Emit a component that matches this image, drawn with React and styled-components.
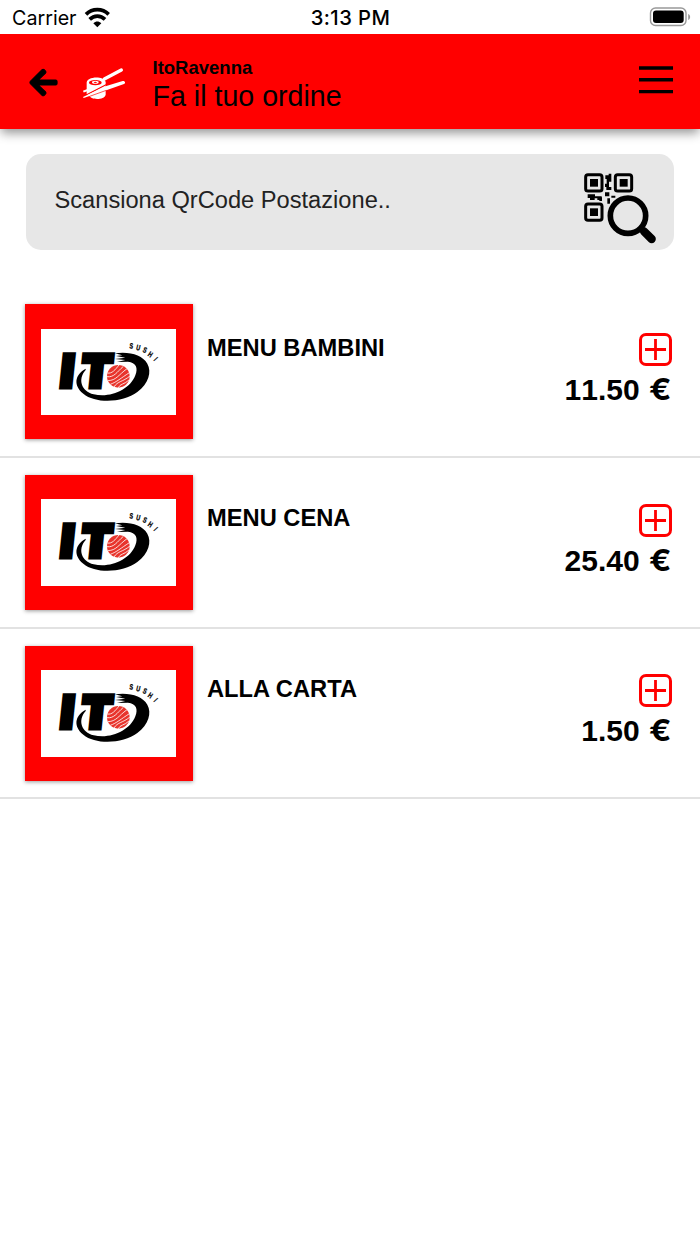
import React from 'react'
import styled, { createGlobalStyle } from 'styled-components'
import { FaArrowLeft } from 'react-icons/fa'

const menus = [
    { name: 'MENU BAMBINI', price: '11.50' },
    { name: 'MENU CENA', price: '25.40' },
    { name: 'ALLA CARTA', price: '1.50' },
]

const WifiIcon = () => (
    <svg width="26" height="20" viewBox="254 22 78 60" fill="none" stroke="#000" strokeWidth="11">
        <path d="M257 41 C276 22 306 22 325 41" />
        <path d="M268 56 C281 43 301 43 314 56" />
        <path d="M279 68 C287 61 295 61 303 68 L291 80 Z" fill="#000" stroke="none" />
    </svg>
)

const SushiIcon = () => (
    <svg width="44" height="32" viewBox="21 24 132 96">
        <path d="M35 70 C33 50 85 46 92 66 L92 104 C88 121 47 121 42 106 L35 102 Z" fill="#fff" />
        <ellipse cx="61" cy="68" rx="19" ry="8" fill="#f00" />
        <ellipse cx="61" cy="67" rx="10" ry="4.5" fill="#fff" />
        <ellipse cx="61" cy="67" rx="5" ry="2" fill="#f00" />
        <path d="M88 57 L139 30" stroke="#fff" strokeWidth="10" strokeLinecap="round" />
        <path d="M25 95 L38 90" stroke="#fff" strokeWidth="6" />
        <path d="M32 106 L96 73" stroke="#f00" strokeWidth="3.5" />
        <path d="M24 111 L94 78 L143 63 C151 62 152 70 147 72 L96 90 L26 114 Z" fill="#fff" />
        <path d="M44 109 L94 91" stroke="#f00" strokeWidth="2" />
    </svg>
)

const QrSearchIcon = () => (
    <svg width="73" height="71" viewBox="42 68 219 213">
        {[[44, 70], [133, 70], [44, 158]].map(([x, y]) => (
            <g key={`${x}-${y}`}>
                <rect x={x + 3} y={y + 3} width="49" height="49" rx="7" fill="none" stroke="#000" strokeWidth="9" />
                <rect x={x + 16} y={y + 16} width="24" height="23" />
            </g>
        ))}
        <path d="M106 75h10v-5h8v24h-7v16h7v9h-15v-9h-4v-10h5v-14h-4zM53 132h22v6h20v11h-13v-5h-8v5H60v-6h-7zM105 126h13v12h-13zM88 141h8v11h-8zM112 144h8v16h-8zM124 136h12v6h-12z" />
        <circle cx="174" cy="196" r="65" fill="#e7e7e7" />
        <circle cx="174" cy="196" r="53" fill="none" stroke="#000" strokeWidth="17" />
        <path d="M210 231 L222 243" stroke="#000" strokeWidth="17" />
        <path d="M222 243 L245 266" stroke="#000" strokeWidth="25" strokeLinecap="round" />
    </svg>
)

const ItoLogo = () => (
    <svg width="135" height="86.67" viewBox="78 100 405 260">
        <path
            d="M212 219 C178 238 175 270 205 294 C242 325 325 321 367 289 C401 263 411 229 397 204 C382 178 344 167 300 173 L322 179 L303 181 L331 186 L300 190 L331 193 L306 199 L339 198 C363 201 370 216 361 239 C345 282 286 308 236 296 C199 287 187 251 212 223 Z"
            fill="#000"
        />
        <g transform="translate(0 273) skewX(-6)" fontFamily="Liberation Sans, sans-serif" fontWeight="700" fontSize="132" stroke="#000" strokeWidth="21">
            <text x="134" y="-1">I</text>
            <text x="200" y="-1">T</text>
        </g>
        <circle cx="310" cy="242" r="34" fill="#e8352d" />
        <g fill="none" stroke="#fff" strokeWidth="2.5">
            <path d="M277 232 C291 235 301 222 312 208" />
            <path d="M276 243 C297 246 306 229 325 212" />
            <path d="M279 255 C304 254 309 239 336 219" />
            <path d="M286 266 C305 259 317 248 343 231" />
            <path d="M297 274 C308 256 323 259 345 241" />
            <path d="M309 277 C316 263 328 267 342 253" />
        </g>
        <g fontFamily="Liberation Sans, sans-serif" fontWeight="700" fontSize="23" textAnchor="middle" stroke="#000" strokeWidth="1">
            {[['S', 349, 150, 6], ['U', 370, 156, 14], ['S', 390, 163, 24], ['H', 406, 176, 34], ['I', 422, 190, 48]].map(([letter, x, y, turn]) => (
                <text key={x} transform={`translate(${x} ${y}) rotate(${turn}) scale(.7 1)`} y="8">{letter}</text>
            ))}
        </g>
    </svg>
)

const MenuItem = ({ name, price }) => (
    <Row>
        <Thumb><LogoPanel><ItoLogo /></LogoPanel></Thumb>
        <Name>{name}</Name>
        <Side>
            <AddButton aria-label={`Aggiungi ${name}`}>
                <svg width="21" height="21" viewBox="0 0 21 21" stroke="#f00" strokeWidth="2.8">
                    <path d="M10.5 0V21M0 10.5H21" />
                </svg>
            </AddButton>
            <Price>{price} <Euro>€</Euro></Price>
        </Side>
    </Row>
)

const App = () => {
    return (
        <Screen>
            <GlobalStyle />
            <StatusBar>
                <Carrier>Carrier <WifiIcon /></Carrier>
                <Clock>3:13 PM</Clock>
                <Battery>
                    <svg width="42" height="20" viewBox="0 0 42 20">
                        <rect x="1.5" y="1" width="35.5" height="17.5" rx="5" fill="none" stroke="#999" strokeWidth="1.4" />
                        <rect x="4" y="3.5" width="30.7" height="12.5" rx="3" />
                        <path d="M39.2 7 C41.8 8 41.8 12 39.2 13 Z" fill="#999" />
                    </svg>
                </Battery>
            </StatusBar>
            <Header>
                <BackButton aria-label="Indietro"><FaArrowLeft size={31} stroke="#000" strokeWidth={18} /></BackButton>
                <Brand><SushiIcon /></Brand>
                <Titles>
                    <Place>ItoRavenna</Place>
                    <Title>Fa il tuo ordine</Title>
                </Titles>
                <Burger aria-label="Menu">
                    <svg width="34" height="28" viewBox="0 0 34 28" stroke="#000" strokeWidth="3.4">
                        <path d="M0 2H34M0 13.8H34M0 25.6H34" />
                    </svg>
                </Burger>
            </Header>
            <Search>
                <span>Scansiona QrCode Postazione..</span>
                <QrSearchIcon />
            </Search>
            <List>
                {menus.map((menu) => <MenuItem key={menu.name} {...menu} />)}
            </List>
        </Screen>
    )
}

const GlobalStyle = createGlobalStyle`
    * {
        box-sizing: border-box;
    }

    body {
        margin: 0;
        background: #fff;
    }

    svg {
        display: block;
        flex-shrink: 0;
        overflow: visible;
    }

    button {
        border: 0;
        padding: 0;
        background: none;
        color: #000;
    }
`

const Screen = styled.div`
    width: 700px;
    height: 1244px;
    overflow: hidden;
    background: #fff;
    color: #000;
    font-family: 'Liberation Sans', Arial, sans-serif;
`

const StatusBar = styled.div`
    height: 34px;
    padding: 0 9px 0 12px;
    display: grid;
    grid-template-columns: 1fr auto 1fr;
    align-items: center;
    font-family: Inter, sans-serif;
    font-size: 20px;
`

const Carrier = styled.div`
    display: flex;
    align-items: center;
    gap: 8px;
    padding-top: 1px;
    font-size: 19.7px;
`

const Clock = styled.div`
    padding: 1px 2px 0 0;
    font-size: 20.2px;
    font-weight: 500;
    letter-spacing: .45px;
`

const Battery = styled.div`
    display: flex;
    justify-content: flex-end;
`

const Header = styled.header`
    height: 94.5px;
    padding: 0 27px 0 28px;
    display: flex;
    align-items: center;
    background: #f00;
    box-shadow: 0 5px 10px -1px rgba(0, 0, 0, .42);
    clip-path: inset(0 0 -24px 0);
`

const BackButton = styled.button`
    width: 54px;
    padding: 2px 0 0;
`

const Brand = styled.div`
    padding-top: 5px;
`

const Titles = styled.div`
    flex: 1;
    padding: 8px 0 0 26.5px;
`

const Place = styled.div`
    font-size: 18.5px;
    line-height: 22px;
    font-weight: 700;
`

const Title = styled.div`
    font-size: 28.6px;
    line-height: 34px;
`

const Burger = styled.button`
    padding-bottom: 2px;
`

const Search = styled.div`
    height: 96px;
    margin: 25.5px 26px 0 25.5px;
    padding: 0 17px 0 29px;
    display: flex;
    align-items: center;
    justify-content: space-between;
    border-radius: 15px;
    background: #e7e7e7;
    color: #222;
    font-size: 23.65px;

    span {
        padding-bottom: 4px;
    }

    svg {
        margin-top: 12.5px;
    }
`

const List = styled.div`
    padding-top: 37.2px;
`

const Row = styled.div`
    height: 170.67px;
    padding: 17.3px 28px 0 24.5px;
    display: flex;
    align-items: flex-start;
    border-bottom: 2px solid #e2e2e2;
`

const Thumb = styled.div`
    width: 168.5px;
    height: 135px;
    display: flex;
    align-items: center;
    justify-content: center;
    background: #f00;
    box-shadow: 0 1px 4px rgba(0, 0, 0, .4);
`

const LogoPanel = styled.div`
    background: #fff;
`

const Name = styled.div`
    flex: 1;
    padding: 29.2px 0 0 14px;
    font-size: 23.7px;
    line-height: 28px;
    font-weight: 700;
`

const Side = styled.div`
    padding-top: 28.5px;
    display: flex;
    flex-direction: column;
    align-items: flex-end;
`

const AddButton = styled.button`
    && {
        width: 33px;
        height: 33px;
        display: flex;
        align-items: center;
        justify-content: center;
        border: 3px solid #f00;
        border-radius: 7px;
    }
`

const Price = styled.div`
    padding: 5px 1px 0 0;
    font-size: 30px;
    line-height: 36px;
    font-weight: 700;
    font-kerning: none;
`

const Euro = styled.span`
    display: inline-block;
    margin-left: 2.5px;
    font-family: Inter, sans-serif;
    transform: scaleX(1.1);
`

export default App
